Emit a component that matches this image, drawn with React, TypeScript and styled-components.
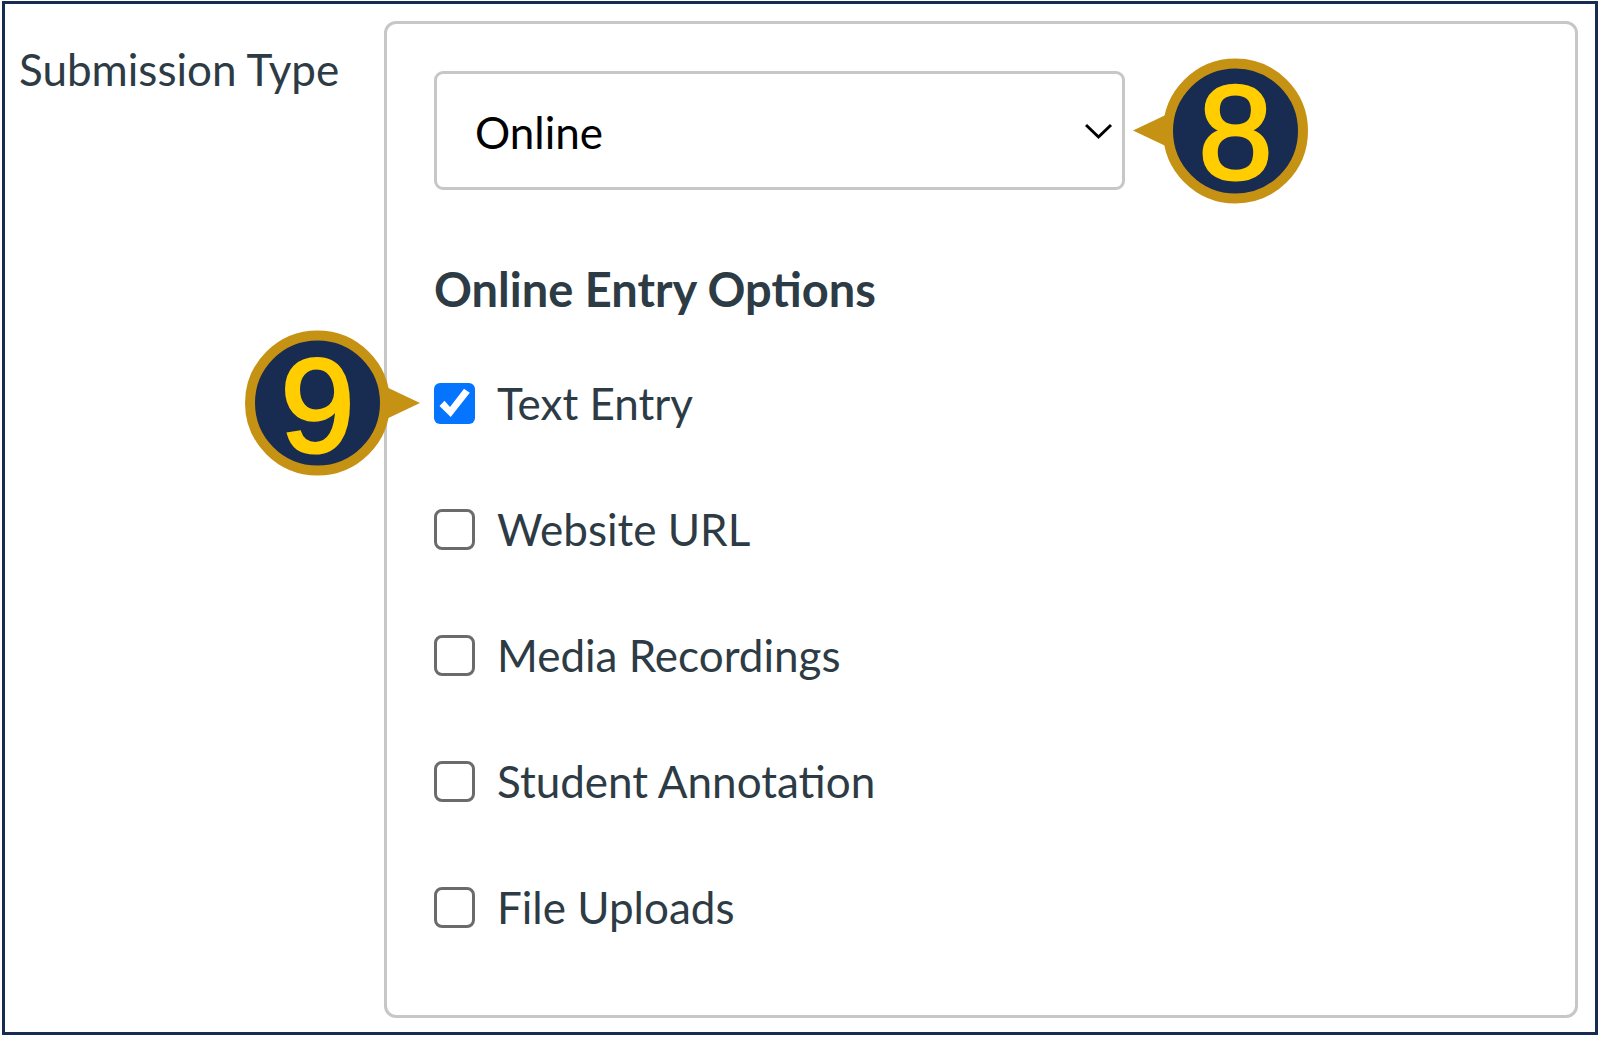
import { useState } from "react";
import styled, { createGlobalStyle } from "styled-components";

const color = {
  ink: "#2d3b45",
  line: "#c7c7c7",
  navy: "#182c51",
  gold: "#c69214",
  yellow: "#ffcd00",
  blue: "#0574ff",
  box: "#6b6b6b",
};

const GlobalStyle = createGlobalStyle`
  *, *::before, *::after { box-sizing: border-box; }
  body {
    margin: 0;
    background: #fff;
    color: ${color.ink};
    font-family: Lato, "Liberation Sans", sans-serif;
    font-size: 44px;
    line-height: 52px;
  }
`;

const Frame = styled.main`
  display: grid;
  grid-template-columns: 365px minmax(0, 1fr);
  margin: 1px 2px;
  padding: 17px 17px 14px 14px;
  border: 3px solid ${color.navy};
`;

const FieldLabel = styled.label`
  padding-top: 22px;
`;

const Panel = styled.section`
  padding: 47px 47px 82px;
  border: 3px solid ${color.line};
  border-radius: 12px;
`;

const SelectBox = styled.div`
  position: relative;
  max-width: 691px;
`;

const Select = styled.select`
  display: block;
  width: 100%;
  height: 119px;
  padding: 2px 80px 0 38px;
  border: 3px solid ${color.line};
  border-radius: 9px;
  background: #fff;
  color: #000;
  font: inherit;
  appearance: none;
`;

const Chevron = styled.svg`
  position: absolute;
  top: 50%;
  right: 12px;
  width: 28px;
  height: 18px;
  transform: translateY(-50%);
  pointer-events: none;
`;

const Options = styled.fieldset`
  display: flex;
  flex-direction: column;
  gap: 74px;
  min-width: 0;
  margin: 73px 0 0;
  padding: 0;
  border: 0;
`;

const Heading = styled.legend`
  margin-bottom: 62px;
  padding: 0;
  font-size: 47px;
  font-weight: 700;
`;

const Option = styled.label`
  position: relative;
  display: flex;
  align-items: center;
  gap: 22px;
`;

const CheckHolder = styled.span`
  display: grid;
  flex: none;
  width: 41px;
  height: 41px;

  > * {
    grid-area: 1 / 1;
  }
`;

const Checkbox = styled.input`
  width: 100%;
  height: 100%;
  margin: 0;
  border: 3px solid ${color.box};
  border-radius: 8px;
  background: #fff;
  appearance: none;

  &:checked {
    border: 0;
    border-radius: 6px;
    background: ${color.blue};
  }
`;

const Tick = styled.svg`
  width: 100%;
  height: 100%;
  pointer-events: none;
`;

const Callout = styled.span<{ $side: "left" | "right" }>`
  position: absolute;
  top: 50%;
  ${(p) => (p.$side === "right" ? "left: calc(100% + 8px);" : "right: calc(100% + 14px);")}
  display: flex;
  justify-content: ${(p) => (p.$side === "right" ? "flex-end" : "flex-start")};
  width: 175px;
  transform: translateY(-50%);

  &::before {
    content: "";
    position: absolute;
    top: 50%;
    ${(p) => (p.$side === "right" ? "left: 0;" : "right: 0;")}
    width: 40px;
    height: 38px;
    background: ${color.gold};
    clip-path: ${(p) =>
      p.$side === "right" ? "polygon(0 50%, 100% 0, 100% 100%)" : "polygon(100% 50%, 0 0, 0 100%)"};
    transform: translateY(-50%);
  }
`;

const Disc = styled.span`
  position: relative;
  display: flex;
  align-items: center;
  justify-content: center;
  width: 145px;
  height: 145px;
  padding-top: 4px;
  border: 10px solid ${color.gold};
  border-radius: 50%;
  background: ${color.navy};
  color: ${color.yellow};
  font-family: "Liberation Sans", Arial, sans-serif;
  font-size: 134px;
  -webkit-text-stroke: 3px ${color.yellow};
  line-height: 126px;
`;

type StepProps = { number: number; side: "left" | "right" };

function Step({ number, side }: StepProps) {
  return (
    <Callout $side={side}>
      <Disc>{number}</Disc>
    </Callout>
  );
}

const entryOptions = [
  { id: "text", label: "Text Entry", step: 9 },
  { id: "url", label: "Website URL" },
  { id: "media", label: "Media Recordings" },
  { id: "annotation", label: "Student Annotation" },
  { id: "upload", label: "File Uploads" },
];

export default function App() {
  const [checked, setChecked] = useState<string[]>(["text"]);

  const toggle = (id: string) =>
    setChecked((now) => (now.includes(id) ? now.filter((item) => item !== id) : [...now, id]));

  return (
    <>
      <GlobalStyle />
      <Frame>
        <FieldLabel htmlFor="submission-type">Submission Type</FieldLabel>
        <Panel>
          <SelectBox>
            <Select id="submission-type" defaultValue="online">
              <option value="online">Online</option>
            </Select>
            <Chevron viewBox="0 0 28 18" aria-hidden="true">
              <path d="M1 3 L13.5 15 L26 3" fill="none" stroke="#000" strokeWidth="3" />
            </Chevron>
            <Step number={8} side="right" />
          </SelectBox>
          <Options>
            <Heading>Online Entry Options</Heading>
            {entryOptions.map(({ id, label, step }) => (
              <Option key={id}>
                <CheckHolder>
                  <Checkbox
                    type="checkbox"
                    checked={checked.includes(id)}
                    onChange={() => toggle(id)}
                  />
                  {checked.includes(id) && (
                    <Tick viewBox="0 0 41 41" aria-hidden="true">
                      <path d="M5.5 23 L10.5 17.8 L16 24 L30 5.8 L35.8 9.8 L16.7 34 Z" fill="#fff" />
                    </Tick>
                  )}
                </CheckHolder>
                {label}
                {step && <Step number={step} side="left" />}
              </Option>
            ))}
          </Options>
        </Panel>
      </Frame>
    </>
  );
}
